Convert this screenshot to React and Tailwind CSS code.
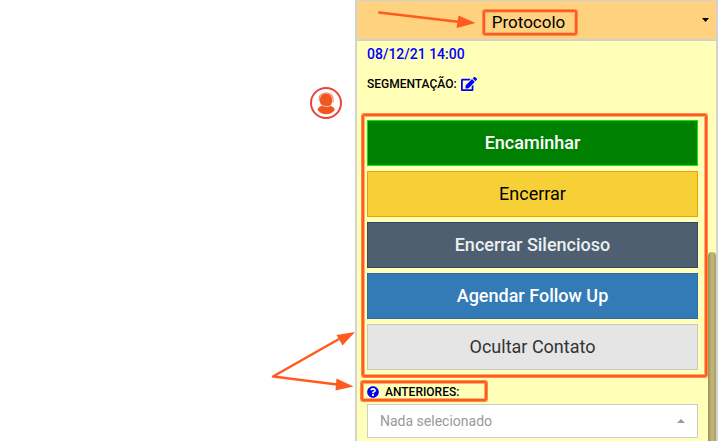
import { FaEdit, FaQuestionCircle } from 'react-icons/fa';

const actions = [
  { label: 'Encaminhar', style: 'border-[#00f000] bg-[#008000] text-white font-medium' },
  { label: 'Encerrar', style: 'border-[#f0a000] bg-[#f7d038] text-black' },
  { label: 'Encerrar Silencioso', style: 'border-[#34495e] bg-[#4d5f70] text-[#ecf0f1] font-medium' },
  { label: 'Agendar Follow Up', style: 'border-[#2e6da4] bg-[#337ab7] text-white font-medium' },
  { label: 'Ocultar Contato', style: 'border-[#c8c8c8] bg-[#e5e5e5] text-[#333333]' },
];

function Highlight({ className }) {
  return (
    <span
      aria-hidden="true"
      className={`pointer-events-none absolute rounded-xs border-2 border-[#ff5a1f] shadow-[0_0_0_1px_#ff8a48,inset_0_0_0_1px_#ffb070] ${className}`}
    />
  );
}

function AgentAvatar() {
  return (
    <svg viewBox="0 0 32 32" className="size-8" role="img" aria-label="Atendente">
      <circle cx="16" cy="16" r="15" fill="#fff" stroke="#e8443a" strokeWidth="2" />
      <path
        d="M7.500 23c.3-2.800 2.500-4 5-4.300 2 1.300 5 1.300 7 0 2.500.3 5 1.500 5.300 4.300-4 5.700-13.300 5.700-17.300 0z"
        fill="#f0561f"
      />
      <rect x="10" y="6.500" width="12" height="13.500" rx="5.500" fill="#f0561f" />
      <path d="M9.200 14.500V11.500C9.400 4 22.800 4 23 11.500V15.500" fill="none" stroke="#f58a6b" strokeWidth="1.200" />
      <path d="M10.500 16.500c2 3.200 7.500 4.200 11 1.500" fill="none" stroke="#ffc4ae" strokeWidth="1" />
    </svg>
  );
}

function HeaderArrow() {
  return (
    <svg
      aria-hidden="true"
      viewBox="0 0 100 22"
      className="pointer-events-none absolute top-[9px] left-[21px] h-[22px] w-[100px]"
    >
      <path d="M1 2.500 82 12" stroke="#ff5a1f" strokeWidth="2.500" strokeLinecap="round" />
      <path d="M80.500 5.500 97.500 13 78.500 18z" fill="#ff5a1f" />
    </svg>
  );
}

function SplitArrows() {
  return (
    <svg
      aria-hidden="true"
      viewBox="0 0 86 64"
      className="pointer-events-none absolute right-0 bottom-[49px] h-16 w-[86px]"
    >
      <path
        d="M70 11 4 48.500 68 56.500"
        fill="none"
        stroke="#ff5a1f"
        strokeWidth="2.500"
        strokeLinejoin="round"
      />
      <path d="M86 4 67.500 7 73.500 17.500zM84.500 58.500 67.500 50.500 66.500 62.500z" fill="#ff5a1f" />
    </svg>
  );
}

function PanelHeader() {
  return (
    <button
      type="button"
      className="relative flex h-[41px] w-full items-center gap-0.5 border-t border-b-2 border-[#d0d0d0] bg-[#ffd27f] pt-1 pr-[7px]"
    >
      <HeaderArrow />
      <span className="flex-1 text-center text-[17px] leading-6">
        <span className="relative inline-block">
          Protocolo
          <Highlight className="top-0 -right-3 -bottom-px -left-[9px]" />
        </span>
      </span>
      <svg viewBox="0 0 7 4" className="mb-1 h-1 w-[7px]" aria-hidden="true">
        <path d="M0 0h7L3.500 4z" fill="#000" />
      </svg>
    </button>
  );
}

export default function App() {
  return (
    <main className="flex min-h-screen bg-white font-['Roboto','Liberation_Sans',sans-serif] text-black">
      <div className="relative flex flex-1 items-start justify-end pt-[87px] pr-[13px]">
        <AgentAvatar />
        <SplitArrows />
      </div>

      <section className="relative w-[363px] shrink-0 border-x-2 border-[#d3d3d3] bg-[#ffffb8]">
        <PanelHeader />

        <div className="pr-[18px] pl-2.5">
          <p className="pt-1 text-sm leading-[18px] font-medium text-[#0000ff]">08/12/21 14:00</p>
          <p className="mt-[13px] flex items-center gap-1 text-xs font-medium">
            SEGMENTAÇÃO:
            <button type="button" aria-label="Editar segmentação" className="text-[#0000ff]">
              <FaEdit className="size-4" />
            </button>
          </p>

          <div className="relative mt-7 flex flex-col gap-[5px]">
            {actions.map((action) => (
              <button
                key={action.label}
                type="button"
                className={`h-[46px] w-full border text-lg ${action.style}`}
              >
                {action.label}
              </button>
            ))}
            <Highlight className="-top-1.5 -right-[9px] -bottom-[7px] -left-[5px]" />
          </div>

          <label
            htmlFor="anteriores"
            className="relative mt-3.5 flex w-fit items-center gap-1.5 text-xs font-medium"
          >
            <FaQuestionCircle className="size-3 text-[#0000ff]" />
            ANTERIORES:
            <Highlight className="-top-[3px] -right-7 -bottom-px -left-1.5" />
          </label>

          <div className="relative mt-1">
            <select
              id="anteriores"
              className="h-[34px] w-full appearance-none border border-[#cccccc] bg-white px-3 text-sm text-[#999999]"
            >
              <option>Nada selecionado</option>
            </select>
            <svg
              viewBox="0 0 8 4"
              className="pointer-events-none absolute top-[15px] right-[13px] h-1 w-2"
              aria-hidden="true"
            >
              <path d="M0 4h8L4 0z" fill="#999" />
            </svg>
          </div>
        </div>

        <div
          aria-hidden="true"
          className="absolute top-[252px] right-0 bottom-0 w-2 rounded-t-full bg-linear-to-r from-[#9a9060] via-[#c4b878] to-[#a89c68]"
        />
      </section>
    </main>
  );
}
